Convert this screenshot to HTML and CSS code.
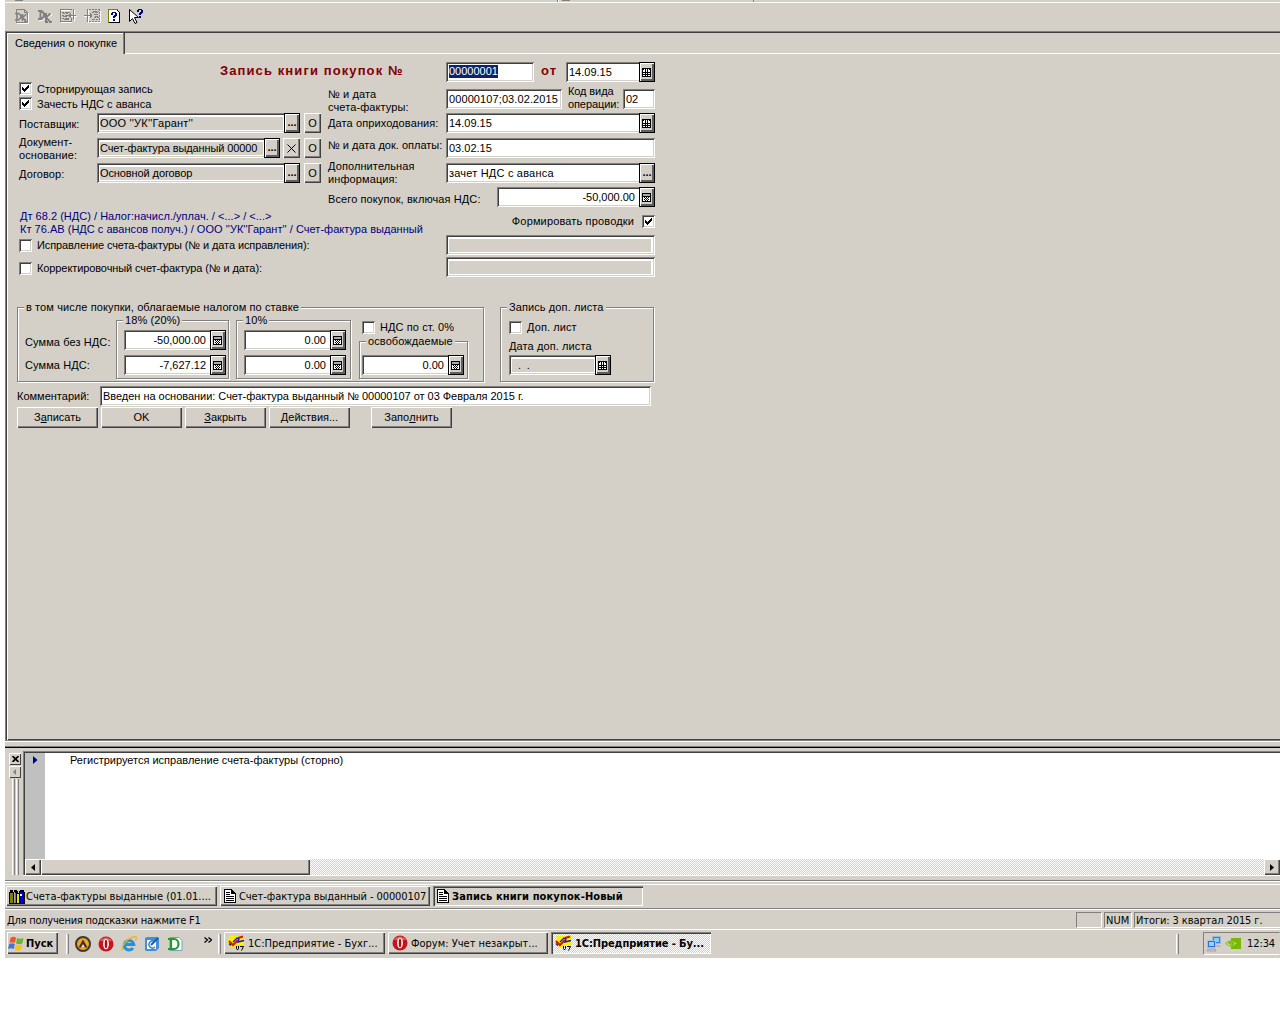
FILE: index.html
```html
<!DOCTYPE html>
<html lang="ru">
<head>
    <meta charset="UTF-8">
    <title>1С:Предприятие - Запись книги покупок</title>
    <link rel="stylesheet" href="styles.css">
</head>
<body>

<svg class="defs" width="0" height="0">
    <symbol id="i-check" viewBox="0 0 7 7" shape-rendering="crispEdges"><path d="M0 2h1v1h1v1h1v-1h1v-1h1v-1h1v-1h1v3h-1v1h-1v1h-1v1h-1v1h-1v-1h-1v-1h-1z"/></symbol>
    <symbol id="i-cal" viewBox="0 0 10 10" shape-rendering="crispEdges">
        <path d="M0 1h9v9H0z"/><path fill="#fff" d="M1 3h7v6H1zM2 2h1v1H2zM4 2h1v1H4zM6 2h1v1H6z"/>
        <path d="M3 3h1v6H3zM5 3h1v6H5zM1 5h7v1H1zM1 7h7v1H1z"/>
    </symbol>
    <symbol id="i-calc" viewBox="0 0 10 10" shape-rendering="crispEdges">
        <path d="M0 1h9v9H0z"/><path fill="#aaa" d="M1 2h7v2H1z"/><path fill="#fff" d="M1 5h7v4H1z"/>
        <path d="M2 5h1v1H2zM4 5h1v1H4zM6 5h1v1H6zM3 6h1v1H3zM5 6h1v1H5zM2 7h1v1H2zM4 7h1v1H4zM6 7h1v1H6zM3 8h1v1H3zM5 8h1v1H5z"/>
    </symbol>
    <symbol id="i-doc" viewBox="0 0 12 14" shape-rendering="crispEdges">
        <path d="M0 0h8v1h1v1h1v1h1v1h1v10H0z"/><path fill="#fff" d="M1 1h6v4h4v8H1z"/>
        <path d="M2 3h4v1H2zM2 5h4v1H2zM2 7h8v1H2zM2 9h8v1H2zM2 11h8v1H2z"/>
    </symbol>
    <symbol id="i-1c" viewBox="0 0 17 16">
        <path fill="#ffef00" d="M1 1h15v4l-2 1 2 1v3H9l-1 2H2V9H0V5l2-1z"/>
        <path fill="none" stroke="#e01010" stroke-width="2" d="M1 6l4 4 5-5M10 3l5-1.500"/>
        <path fill="none" stroke="#1414c8" stroke-width="1.300" d="M1 8.500l2 2M5 7l4-4 2 1-1 3 6-1.500"/>
        <path fill="none" stroke="#000" d="M8.500 11v2.500l1 1.500 1-1.500v-2.500M12 11.500h3.500l-2 4"/>
    </symbol>
    <symbol id="i-opera" viewBox="0 0 16 16">
        <circle cx="8" cy="8" r="7.500" fill="#c4161c"/><path d="M2 5a7 7 0 0 1 12 0" fill="#e2605c"/>
        <ellipse cx="8" cy="8" rx="2.900" ry="5.300" fill="#fff"/><ellipse cx="8" cy="8" rx="1.300" ry="4.300" fill="#a01015"/>
    </symbol>
</svg>

<div class="screen">

    <div class="menu-edge"><i></i><b></b><i></i><b class="bar2"></b></div>

    <div class="toolbar">
        <svg width="16" height="16" viewBox="0 0 16 16"><path fill="none" stroke="#fff" d="M3 15.500h11.500V5"/><path fill="none" stroke="#808080" d="M2.500 5V1.500h8l3 3v10h-11v-2M10.500 1.500v3h3"/><path fill="none" stroke="#808080" stroke-width="1.600" d="M1 5.500h3.500l2.500 2v2l-2.500 2.500H1M3 6v6M8.500 6v7M12.500 6l-4 3.500 4 4M11 11v3"/></svg>
        <svg width="16" height="16" viewBox="0 0 16 16"><path fill="none" stroke="#fff" stroke-width="1.500" d="M4 4v7M2 4h3l3 2v3l-3 3H2M10 6v8M15 6l-5 4 5 5"/><path fill="none" stroke="#808080" stroke-width="2" d="M3.500 3v8M1 3h3.500l2.500 2.500v3L4.500 11H1M9 5v8M13.500 5.500l-4.500 4 4.500 4.500M8 14h3M12 14h3"/></svg>
        <svg width="17" height="16" viewBox="0 0 17 16" shape-rendering="crispEdges"><path fill="none" stroke="#fff" d="M1 2.500h9M1 14.500h11M14.500 2v11M10 8.500h7"/><path fill="none" stroke="#808080" d="M0 1.500h12M.5 1v12.500h11V10M2 4.500h2m1 0h5M3 5.500h2m1 0h2M2 7.500h2m1 0h3M3 8.500h4M2 10.500h2m1 0h4M4 11.500h5M13.500 1v11M8 7.500h8M9.500 6v3M10.500 5v5"/></svg>
        <svg width="17" height="16" viewBox="0 0 17 16" shape-rendering="crispEdges"><path fill="none" stroke="#fff" d="M6 14.500h11M16.500 3v12M4.500 2v13M0 8.500h6"/><path fill="none" stroke="#808080" stroke-dasharray="2 1" d="M5 1.500h11M5 13.500h11M15.500 1v12"/><path fill="none" stroke="#808080" d="M3.500 1v13M0 7.500h8M7.500 6v3M6.500 5v5M9 3.500h4m1 0h1M8 4.500h2m1 0h3M10 6.500h4M11 8.500h3M10 9.500h2m1 0h2M8 11.500h3m1 0h2"/></svg>
        <svg width="13" height="16" viewBox="0 0 13 16" shape-rendering="crispEdges"><path fill="#fff" stroke="#000" d="M.5 1.500h8l3 3v10H.5z"/><path fill="none" stroke="#808000" d="M.5 14.500v-13h9"/><path fill="#000080" d="M4 4h4v1h1v3H8v1H7v1H5V8h1V7h1V5H5v2H3V5h1zM5 11h2v2H5z"/></svg>
        <svg width="16" height="17" viewBox="0 0 16 17"><path fill="#fff" stroke="#000" d="M1.500 1.500v12l3-3 2.500 5 2-1-2.500-5h4z"/><path fill="#000080" shape-rendering="crispEdges" d="M10 1h4v1h1v3h-1v1h-1v1h-2V5h1V4h1V2h-2v2H9V2h1zM11 8h2v2h-2z"/></svg>
    </div>

    <div class="document">
        <div class="tabs">
            <div class="tab">Сведения о покупке</div>
            <div class="tab-rest"></div>
        </div>

        <div class="form">
            <div class="title-row">
                <span class="title">Запись книги покупок №</span>
                <div class="field number"><span class="selected">00000001</span></div>
                <span class="title from">от</span>
                <div class="field w89"><span>14.09.15</span><button class="pick"><svg width="10" height="10"><use href="#i-cal"/></svg></button></div>
            </div>

            <div class="columns">
                <div class="left">
                    <div class="check-row"><span class="check"><svg width="7" height="7"><use href="#i-check"/></svg></span>Сторнирующая запись</div>
                    <div class="check-row"><span class="check"><svg width="7" height="7"><use href="#i-check"/></svg></span>Зачесть НДС с аванса</div>
                    <div class="row first">
                        <label>Поставщик:</label>
                        <div class="field off w203"><span class="wide">ООО ''УК''Гарант''</span><button class="pick dots">...</button></div>
                        <button class="small">O</button>
                    </div>
                    <div class="row">
                        <label>Документ-<br>основание:</label>
                        <div class="field off w183"><span>Счет-фактура выданный 00000</span><button class="pick dots">...</button></div>
                        <button class="small x"><svg width="9" height="9"><path d="M.5.5l8 8M8.500.5l-8 8" stroke="#000"/></svg></button>
                        <button class="small">O</button>
                    </div>
                    <div class="row">
                        <label>Договор:</label>
                        <div class="field off w203"><span>Основной договор</span><button class="pick dots">...</button></div>
                        <button class="small">O</button>
                    </div>
                </div>

                <div class="right">
                    <div class="row invoice">
                        <label>№ и дата<br>счета-фактуры:</label>
                        <div class="field w116"><span>00000107;03.02.2015</span></div>
                        <label class="code">Код вида<br>операции:</label>
                        <div class="field w32"><span>02</span></div>
                    </div>
                    <div class="row">
                        <label>Дата оприходования:</label>
                        <div class="field w209"><span>14.09.15</span><button class="pick"><svg width="10" height="10"><use href="#i-cal"/></svg></button></div>
                    </div>
                    <div class="row up">
                        <label>№ и дата док. оплаты:</label>
                        <div class="field w209"><span>03.02.15</span></div>
                    </div>
                    <div class="row">
                        <label>Дополнительная<br>информация:</label>
                        <div class="field w209"><span class="wide">зачет НДС с аванса</span><button class="pick dots">...</button></div>
                    </div>
                    <div class="row total">
                        <label>Всего покупок, включая НДС:</label>
                        <div class="field num w158"><span>-50,000.00</span><button class="pick"><svg width="10" height="10"><use href="#i-calc"/></svg></button></div>
                    </div>
                </div>
            </div>

            <div class="postings">
                <div class="accounts">Дт 68.2 (НДС) / Налог:начисл./уплач. / &lt;...&gt; / &lt;...&gt;<br>Кт 76.АВ (НДС с авансов получ.) / ООО ''УК''Гарант'' / Счет-фактура выданный</div>
                <div class="make">Формировать проводки<span class="check"><svg width="7" height="7"><use href="#i-check"/></svg></span></div>
            </div>

            <div class="fix-row"><span class="check"></span><span class="fix1">Исправление счета-фактуры (№ и дата исправления):</span><div class="field off w209"><span></span></div></div>
            <div class="fix-row second"><span class="check"></span><span class="fix2">Корректировочный счет-фактура (№ и дата):</span><div class="field off w209"><span></span></div></div>

            <div class="groups">
                <div class="group main">
                    <span class="legend">в том числе покупки, облагаемые налогом по ставке</span>
                    <div class="sum-labels"><span>Сумма без НДС:</span><span>Сумма НДС:</span></div>
                    <div class="group rate">
                        <span class="legend">18% (20%)</span>
                        <div class="field num w102"><span>-50,000.00</span><button class="pick"><svg width="10" height="10"><use href="#i-calc"/></svg></button></div>
                        <div class="field num w102"><span>-7,627.12</span><button class="pick"><svg width="10" height="10"><use href="#i-calc"/></svg></button></div>
                    </div>
                    <div class="group rate ten">
                        <span class="legend">10%</span>
                        <div class="field num w102"><span>0.00</span><button class="pick"><svg width="10" height="10"><use href="#i-calc"/></svg></button></div>
                        <div class="field num w102"><span>0.00</span><button class="pick"><svg width="10" height="10"><use href="#i-calc"/></svg></button></div>
                    </div>
                    <div class="zero">
                        <div class="check-row"><span class="check"></span>НДС по ст. 0%</div>
                        <div class="group free">
                            <span class="legend">освобождаемые</span>
                            <div class="field num w102"><span>0.00</span><button class="pick"><svg width="10" height="10"><use href="#i-calc"/></svg></button></div>
                        </div>
                    </div>
                </div>
                <div class="group extra">
                    <span class="legend">Запись доп. листа</span>
                    <div class="check-row"><span class="check"></span>Доп. лист</div>
                    <div class="extra-date">Дата доп. листа</div>
                    <div class="field off w102"><span>&nbsp; .&nbsp; .</span><button class="pick"><svg width="10" height="10"><use href="#i-cal"/></svg></button></div>
                </div>
            </div>

            <div class="comment">
                <label>Комментарий:</label>
                <div class="field w551"><span>Введен на основании: Счет-фактура выданный № 00000107 от 03 Февраля 2015 г.</span></div>
            </div>
            <div class="actions">
                <button>З<u>а</u>писать</button>
                <button>OK</button>
                <button><u>З</u>акрыть</button>
                <button><u>Д</u>ействия...</button>
                <button class="fill">Запо<u>л</u>нить</button>
            </div>
        </div>
    </div>

    <div class="splitter"></div>

    <div class="output">
        <div class="grip">
            <button><svg width="7" height="6" viewBox="0 0 7 6"><path d="M.5 0l6 6M6.500 0l-6 6" stroke="#000" stroke-width="1.700"/></svg></button>
            <button><svg width="4" height="6" viewBox="0 0 4 6"><path d="M3 0v6L0 3z" fill="#808080"/></svg></button>
            <div class="lines"><i></i><i></i></div>
        </div>
        <div class="log">
            <div class="log-body">
                <div class="marks"><svg width="5" height="8" viewBox="0 0 5 8"><path d="M0 0l4.500 4L0 8z" fill="#000080"/></svg></div>
                <div class="message">Регистрируется исправление счета-фактуры (сторно)</div>
            </div>
            <div class="scroll">
                <button><svg width="4" height="7" viewBox="0 0 4 7"><path d="M4 0v7L0 3.500z"/></svg></button>
                <div class="thumb"></div>
                <div class="track"></div>
                <button class="end"><svg width="4" height="7" viewBox="0 0 4 7"><path d="M0 0v7l4-3.500z"/></svg></button>
            </div>
        </div>
    </div>

    <div class="windows">
        <button class="w211"><svg width="16" height="15" viewBox="0 0 16 15" shape-rendering="crispEdges"><path d="M0 3h1V1h3v2h1V1h3v1h1v2h1V2h1V1h4v2h1v12H0z"/><path fill="#808000" d="M1 4h3v10H1z"/><path fill="#a8a8a8" d="M5 3h1v11H5z"/><path fill="#00a0a0" d="M6 4h1v10H6z"/><path fill="#e8e000" d="M8 5h2v9H8z"/><path fill="#0000d0" d="M11 3h3v11h-3z"/><path fill="#fff" d="M11 5h2v2h-2z"/></svg><span class="t1">Счета-фактуры выданные (01.01....</span></button>
        <button class="w210"><svg width="12" height="14"><use href="#i-doc"/></svg><span class="t2">Счет-фактура выданный - 00000107</span></button>
        <button class="w210 current"><svg width="12" height="14"><use href="#i-doc"/></svg><span class="t3">Запись книги покупок-Новый</span></button>
    </div>

    <div class="status">
        <span class="hint">Для получения подсказки нажмите F1</span>
        <span class="panel caps"></span>
        <span class="panel nlock">NUM</span>
        <span class="panel totals">Итоги: 3 квартал 2015 г.</span>
    </div>

    <div class="taskbar">
        <button class="start"><svg width="16" height="15" viewBox="0 0 16 15"><path fill="#e8562a" d="M2.500 2Q5 0 8 1.500L7 7Q4 5.500 1.500 7z"/><path fill="#6ab52f" d="M9 2q3 1.500 6.500 0l-1.200 5.500Q11 9 8 7.500z"/><path fill="#3b78dc" d="M1.200 8q3-1.500 5.600 0l-1 5Q3 11.500 0 13z"/><path fill="#f6c21c" d="M7.700 8.500q3 1.500 6.300 0L13 14q-3 1.500-6.300-.5z"/></svg><span>Пуск</span></button>
        <i class="sep"></i>
        <div class="quick">
            <svg width="16" height="16" viewBox="0 0 16 16"><circle cx="8" cy="8" r="7" fill="#f2a51d" stroke="#383838" stroke-width="2"/><path d="M8 3.500l4.500 8H10L8 8l-2 3.500H3.500z" fill="#333"/><path d="M8 8.500l1.500 2.500h-3z" fill="#fff0a0"/></svg>
            <svg width="16" height="16"><use href="#i-opera"/></svg>
            <svg width="16" height="16" viewBox="0 0 16 16"><path fill="none" stroke="#2590dc" stroke-width="3" d="M3.500 8.500h9.300A4.800 4.800 0 1 0 12 12"/><path fill="none" stroke="#e8b62a" stroke-width="1.400" d="M2 14.500C-1 12 5 3 12 1c4-1 4 1 2.500 4"/></svg>
            <svg width="16" height="16" viewBox="0 0 16 16"><path fill="#3f8fda" d="M1 2l2-1h11l1 1v10l-3 3H2l-1-1z"/><path fill="#fff" d="M3 4h9v9H3z"/><path fill="none" stroke="#2c78c4" stroke-width="1.300" d="M11 6a3.500 3.500 0 1 0 0 5"/><path stroke="#1c5ca8" stroke-width="2" d="M7 9l7-7"/></svg>
            <svg width="16" height="16" viewBox="0 0 16 16"><path fill="#fff" stroke="#7aa0c0" d="M3 1.500h9l3 3v10H3z"/><path fill="none" stroke="#24982c" stroke-width="2.200" d="M1 3h6c6 0 6 10 0 10H1M4 3v10"/></svg>
        </div>
        <svg class="more" width="8" height="7" viewBox="0 0 8 7"><path fill="none" stroke="#000" stroke-width="1.300" d="M.5.5l3 2.500-3 2.500M4.500.5l3 2.500-3 2.500"/></svg>
        <i class="sep two"></i>
        <button class="task w161"><svg width="17" height="16"><use href="#i-1c"/></svg><span class="k1">1С:Предприятие - Бухг...</span></button>
        <button class="task w160"><svg width="16" height="16"><use href="#i-opera"/></svg><span class="k2">Форум: Учет незакрыт...</span></button>
        <button class="task w160 current"><svg width="17" height="16"><use href="#i-1c"/></svg><span class="k3">1С:Предприятие - Бу...</span></button>
        <i class="sep last"></i>
        <div class="tray">
            <svg width="16" height="16" viewBox="0 0 16 16"><path fill="#3a7ce0" stroke="#9db8dc" d="M6.500.5h8v7h-8z"/><path fill="#7fd0fa" d="M8 2h5v4H8z"/><path fill="#b8b8c8" d="M8 9h6l1 2H9z"/><path fill="#2f6ed8" stroke="#a8c0e4" d="M1.500 4.500h8v7h-8z"/><path fill="#8ad8ff" d="M3 6h5v4H3z"/><path fill="#c8c8d4" stroke="#8888a0" stroke-width=".6" d="M2 13h7l1 2H1z"/></svg>
            <svg width="16" height="11" viewBox="0 0 16 11"><path fill="#76b900" d="M6 0h10v11H6z"/><path fill="#d4e8a8" stroke="#76b900" d="M.7 5.500Q6 0 12 5.500 6 11 .7 5.500z"/><path fill="none" stroke="#76b900" stroke-width="1.200" d="M3 5.500q3-3 6 0-3 3-4 0 1.500-1.500 3 0"/></svg>
            <span>12:34</span>
        </div>
    </div>
</div>

</body>
</html>
```
FILE: styles.css
```css
* {
    box-sizing: border-box;
}
body {
    margin: 0;
    background: #fff;
    color: #000;
    font: 11px/13px "Liberation Sans", Arial, sans-serif;
    overflow: hidden;
}
.defs {
    display: none;
}
svg {
    display: block;
    flex: none;
}
button {
    font: inherit;
    letter-spacing: inherit;
    color: #000;
    margin: 0;
    padding: 0;
    border: 0;
    background: #d4d0c8;
    display: flex;
    align-items: center;
    justify-content: center;
    flex: none;
    white-space: nowrap;
}
.screen {
    margin-left: 5px;
    width: 1275px;
    height: 958px;
    background: #d4d0c8;
    display: flex;
    flex-direction: column;
    overflow: hidden;
    white-space: nowrap;
}

/* toolbar */
.menu-edge {
    height: 3px;
    border-bottom: 1px solid #fff;
    display: flex;
    flex: none;
}
.menu-edge i {
    width: 8px;
    height: 1px;
    margin-left: 10px;
    background: #808080;
}
.menu-edge b {
    width: 2px;
    margin-left: 534px;
    background: #808080;
    border-right: 1px solid #fff;
}
.menu-edge b + i {
    margin-left: 3px;
}
.menu-edge .bar2 {
    width: 1px;
    margin-left: 183px;
    border: 0;
}
.toolbar {
    height: 28px;
    padding: 5px 0 0 9px;
    display: flex;
    gap: 7px;
    flex: none;
}

/* document window */
.document {
    height: 710px;
    flex: none;
    border: solid #808080;
    border-width: 1px 0 1px 1px;
    box-shadow: inset 1px 1px 0 #404040, inset 2px 2px 0 #fff, inset 0 -1px 0 #404040;
    padding: 1px 0 0 1px;
}
.tabs {
    display: flex;
    height: 21px;
}
.tab {
    width: 118px;
    padding: 4px 0 0 8px;
    border-right: 1px solid #404040;
    box-shadow: inset -1px 0 0 #808080;
}
.tab-rest {
    flex: 1;
    border-bottom: 1px solid #fff;
    background: #d4d0c8;
}
.form {
    width: 648px;
    padding: 8px 0 0 10px;
}
.title-row {
    display: flex;
    height: 20px;
    align-items: center;
}
.title {
    color: #800000;
    font-size: 13px;
    font-weight: bold;
    letter-spacing: 1.100px;
    width: 226px;
    flex: none;
    margin-left: 203px;
    margin-top: -3px;
}
.title.from {
    width: 25px;
    margin-left: 7px;
}
.field {
    height: 20px;
    display: flex;
    flex: none;
    background: #fff;
    box-shadow: inset 1px 1px 0 #808080, inset -1px -1px 0 #fff, inset 2px 2px 0 #404040, inset -2px -2px 0 #d4d0c8;
    padding: 3px 0 3px 3px;
}
.field span {
    flex: 1;
    line-height: 15px;
    overflow: hidden;
}
.field .selected {
    flex: none;
    background: #0a246a;
    color: #fff;
    line-height: 13px;
    height: 13px;
}
.field.off {
    padding-right: 3px;
}
.field.off span {
    background: #d4d0c8;
    margin: 1px 1px 0 0;
    line-height: 13px;
    letter-spacing: -.1px;
}
.field .wide,
.field.off .wide {
    letter-spacing: .2px;
}
.field.num span {
    text-align: right;
    padding-right: 4px;
}
.pick {
    width: 16px;
    height: 20px;
    margin: -3px 0 -3px;
    border: 1px solid #000;
    box-shadow: inset 1px 1px 0 #fff, inset -2px -2px 0 #606060;
}
.off .pick {
    margin-right: -3px;
}
.dots {
    font-weight: bold;
    letter-spacing: 0;
    padding-bottom: 2px;
}
.number { width: 88px; }
.w32 { width: 32px; }
.w89 { width: 89px; }
.w102 { width: 102px; }
.w116 { width: 116px; }
.w158 { width: 158px; }
.w160 { width: 160px; }
.w161 { width: 161px; }
.w183 { width: 183px; }
.w203 { width: 203px; }
.w209 { width: 209px; }
.w210 { width: 210px; }
.w211 { width: 211px; }
.w551 { width: 551px; }

.check {
    width: 13px;
    height: 13px;
    flex: none;
    background: #fff;
    box-shadow: inset 1px 1px 0 #808080, inset -1px -1px 0 #fff, inset 2px 2px 0 #404040, inset -2px -2px 0 #d4d0c8;
    display: flex;
    align-items: center;
    justify-content: center;
}
.check-row {
    display: flex;
    gap: 5px;
    height: 15px;
}
.columns {
    display: flex;
    height: 126px;
}
.left {
    width: 309px;
    flex: none;
    padding-left: 2px;
}
.left .check-row {
    line-height: 14px;
}
.right {
    padding-left: 2px;
}
.row {
    display: flex;
    height: 20px;
    margin-bottom: 5px;
    align-items: center;
}
.row.first {
    margin-top: 1px;
}
.row label {
    width: 78px;
    flex: none;
    letter-spacing: .1px;
}
.left .row label {
    padding-top: 2px;
}
.right .row label {
    width: 118px;
}
.small {
    width: 17px;
    height: 20px;
    margin-left: 4px;
    box-shadow: inset 1px 1px 0 #fff, inset -1px -1px 0 #404040, inset -2px -2px 0 #808080;
}
.row .x {
    margin-left: 3px;
}
.right .invoice {
    margin: 7px 0 4px;
}
.right .invoice label {
    padding-top: 4px;
}
.right .row .w116 span {
    letter-spacing: .1px;
}
.right .invoice .code {
    width: 55px;
    margin-left: 6px;
    padding: 0 0 2px;
    letter-spacing: -.1px;
}
.right .up label {
    margin-top: -6px;
    letter-spacing: 0;
}
.right .total {
    margin-top: -1px;
}
.right .total label {
    width: 169px;
    padding-top: 4px;
}

/* postings and corrections */
.postings {
    display: flex;
    justify-content: space-between;
    height: 26px;
    margin-top: 2px;
}
.accounts {
    color: #000080;
    padding-left: 3px;
    letter-spacing: .020px;
}
.make {
    display: flex;
    gap: 8px;
    margin: 5px 0 0;
    letter-spacing: .150px;
}
.fix-row {
    display: flex;
    align-items: center;
    gap: 5px;
    padding-left: 2px;
    height: 22px;
    letter-spacing: -.1px;
    margin-top: -2px;
}
.fix-row .field {
    margin-left: auto;
}
.fix-row.second {
    margin-top: 0;
}
.fix-row.second .check,
.fix-row.second .fix2 {
    margin-top: 2px;
}

/* tax groups */
.groups {
    display: flex;
    margin-top: 29px;
    gap: 16px;
    letter-spacing: .1px;
}
.groups .num {
    letter-spacing: 0;
}
.group {
    position: relative;
    border: 1px solid #808080;
    box-shadow: inset 1px 1px 0 #fff, 1px 1px 0 #fff;
}
.legend {
    position: absolute;
    top: -7px;
    left: 6px;
    padding: 0 2px 0 2px;
    background: #d4d0c8;
}
.main {
    width: 467px;
    height: 75px;
    display: flex;
}
.sum-labels {
    width: 98px;
    padding: 28px 0 0 7px;
    display: flex;
    flex-direction: column;
    gap: 10px;
}
.rate {
    width: 113px;
    height: 59px;
    margin-top: 12px;
    padding: 9px 0 0 7px;
    display: flex;
    flex-direction: column;
    gap: 5px;
}
.ten {
    width: 115px;
    margin-left: 7px;
}
.zero {
    margin-left: 8px;
    padding-top: 13px;
}
.zero .check-row {
    padding-left: 3px;
}
.free {
    width: 109px;
    height: 38px;
    margin-top: 5px;
    padding: 13px 0 0 2px;
}
.extra {
    width: 154px;
    height: 75px;
    padding: 13px 0 0 8px;
}
.extra-date {
    margin: 4px 0 2px;
}
.comment {
    display: flex;
    align-items: center;
    margin-top: 4px;
}
.comment label {
    width: 83px;
}
.comment .field {
    letter-spacing: -.030px;
}
.actions {
    display: flex;
    gap: 3px;
    margin-top: 1px;
}
.actions button {
    width: 81px;
    height: 21px;
    box-shadow: inset 1px 1px 0 #fff, inset -1px -1px 0 #404040, inset -2px -2px 0 #808080;
}
.actions .fill {
    margin-left: 18px;
}

/* message window */
.splitter {
    height: 7px;
    flex: none;
    border-top: 1px solid #fff;
    border-bottom: 1px solid #000;
    box-shadow: inset 0 -1px 0 #808080;
}
.output {
    height: 133px;
    flex: none;
    display: flex;
    border-bottom: 1px solid #808080;
    padding: 3px 0 5px;
}
.grip {
    width: 18px;
    padding: 2px 1px 0 4px;
}
.grip button {
    width: 12px;
    height: 12px;
    margin-bottom: 1px;
    box-shadow: inset 1px 1px 0 #fff, inset -1px -1px 0 #404040;
}
.lines {
    display: flex;
    gap: 1px;
    height: 96px;
    padding-left: 3px;
}
.lines i {
    width: 3px;
    border-left: 1px solid #fff;
    border-right: 1px solid #808080;
}
.log {
    flex: 1;
    border: solid #808080;
    border-width: 1px 0 0 1px;
    box-shadow: inset 1px 1px 0 #404040, 0 1px 0 #fff;
    padding: 1px 0 0 1px;
    display: flex;
    flex-direction: column;
}
.log-body {
    flex: 1;
    display: flex;
    background: #fff;
}
.marks {
    width: 20px;
    background: #c0c0c0;
    padding: 3px 0 0 8px;
}
.message {
    padding: 1px 0 0 25px;
}
.scroll {
    height: 16px;
    display: flex;
}
.scroll button,
.thumb {
    width: 16px;
    box-shadow: inset 1px 1px 0 #fff, inset -1px -1px 0 #404040, inset -2px -2px 0 #808080;
}
.scroll .thumb {
    width: 269px;
}
.track {
    flex: 1;
    background: repeating-conic-gradient(#fff 0 25%, #d4d0c8 0 50%) 0 0 / 2px 2px;
}

/* window list */
.windows,
.status,
.start,
.task,
.tray {
    font-family: "DejaVu Sans Condensed", "DejaVu Sans", sans-serif;
}
.windows {
    height: 28px;
    flex: none;
    display: flex;
    gap: 3px;
    padding: 5px 0 0 1px;
    border-bottom: 1px solid #808080;
    box-shadow: inset 0 1px 0 #fff, inset 0 3px 0 #d4d0c8, inset 0 4px 0 #fff;
}
.windows button {
    height: 20px;
    justify-content: flex-start;
    padding-left: 4px;
    gap: 3px;
    box-shadow: inset 1px 1px 0 #fff, inset -1px -1px 0 #404040, inset -2px -2px 0 #808080;
}
.windows .w211 {
    padding-left: 3px;
    gap: 1px;
}
.windows .t2 {
    letter-spacing: -.080px;
}
.windows .t3 {
    letter-spacing: .120px;
}
.windows .current {
    font-weight: bold;
    box-shadow: inset 1px 1px 0 #808080, inset 2px 2px 0 #404040, inset -1px -1px 0 #fff;
}
.status {
    height: 21px;
    flex: none;
    display: flex;
    border: solid #fff;
    border-width: 1px 0;
    padding-top: 2px;
}
.hint {
    flex: 1;
    padding: 2px 0 0 2px;
    letter-spacing: -.240px;
}
.panel {
    height: 16px;
    margin-right: 2px;
    padding: 1px 0 0 1px;
    border: 1px solid;
    border-color: #808080 #fff #fff #808080;
}
.caps { width: 26px; }
.nlock { width: 28px; }
.totals {
    width: 146px;
    margin-right: 0;
    border-right: 0;
    letter-spacing: -.1px;
}

/* taskbar */
.taskbar {
    flex: 1;
    display: flex;
    align-items: flex-start;
    padding: 2px 0 0 2px;
}
.start,
.task {
    height: 22px;
    justify-content: flex-start;
    padding-left: 2px;
    gap: 2px;
    box-shadow: inset 1px 1px 0 #fff, inset -1px -1px 0 #404040, inset -2px -2px 0 #808080;
}
.start {
    width: 51px;
    padding-left: 1px;
    font-weight: bold;
}
.sep {
    width: 3px;
    height: 20px;
    margin: 2px 0 0 8px;
    border-left: 1px solid #fff;
    border-right: 1px solid #808080;
    flex: none;
}
.quick {
    display: flex;
    gap: 7px;
    margin: 4px 0 0 6px;
}
.more {
    margin: 5px 0 0 21px;
}
.sep.two {
    margin-left: 6px;
}
.task {
    margin-left: 3px;
    padding-left: 4px;
    gap: 3px;
}
.sep.two + .task {
    margin-left: 3px;
}
.task.current {
    font-weight: bold;
    background: repeating-conic-gradient(#fff 0 25%, #d4d0c8 0 50%) 0 0 / 2px 2px;
    box-shadow: inset 1px 1px 0 #808080, inset 2px 2px 0 #404040, inset -1px -1px 0 #fff;
}
.k3 {
    letter-spacing: -.1px;
}
.sep.last {
    margin-left: auto;
}
.tray {
    width: 77px;
    height: 23px;
    margin-left: 24px;
    padding-left: 2px;
    display: flex;
    align-items: center;
    gap: 3px;
    flex: none;
    border: 1px solid;
    border-color: #808080 transparent #fff #808080;
}
.tray span {
    padding-left: 3px;
    letter-spacing: -.1px;
}
```
